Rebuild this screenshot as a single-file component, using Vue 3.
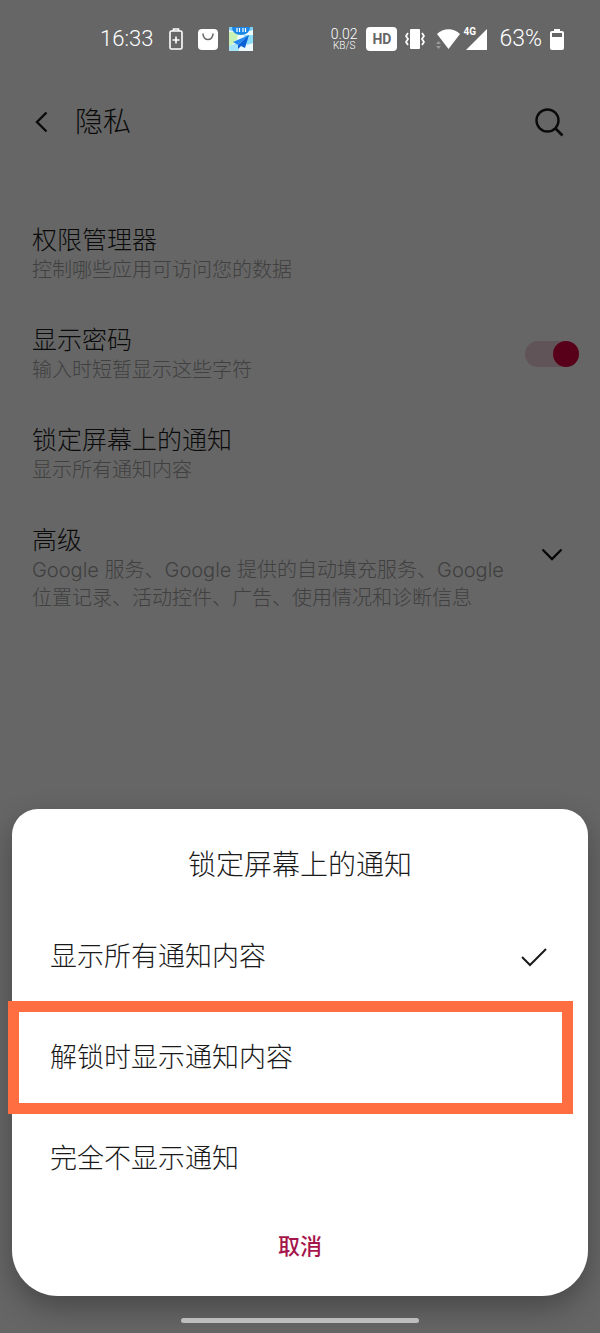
<script setup>
import { ref } from 'vue';

const showPassword = ref(true);
const selected = ref('all');

const rows = [
    { id: 'permission', title: '权限管理器', summary: '控制哪些应用可访问您的数据' },
    { id: 'password', title: '显示密码', summary: '输入时短暂显示这些字符', control: 'switch' },
    { id: 'lock', title: '锁定屏幕上的通知', summary: '显示所有通知内容' },
    {
        id: 'advanced',
        title: '高级',
        summary: 'Google 服务、Google 提供的自动填充服务、Google 位置记录、活动控件、广告、使用情况和诊断信息',
        control: 'expand',
    },
];

const options = [
    { value: 'all', label: '显示所有通知内容' },
    { value: 'unlocked', label: '解锁时显示通知内容', highlight: true },
    { value: 'none', label: '完全不显示通知' },
];
</script>

<template>
    <div class="screen">
        <div class="status-bar">
            <div class="status-group">
                <span class="clock">16:33</span>
                <svg class="icon-saver" width="14" height="22" viewBox="0 0 14 22">
                    <path d="M4.5 3V1h5v2" fill="none" stroke="#fff" stroke-width="1.6" />
                    <rect x="1" y="3" width="12" height="18" rx="1.5" fill="none" stroke="#fff" stroke-width="1.6" />
                    <path d="M7 8.5v7M3.5 12h7" stroke="#fff" stroke-width="1.6" />
                </svg>
                <svg width="20" height="21" viewBox="0 0 20 21">
                    <rect width="20" height="21" rx="4" fill="#fff" />
                    <path d="M5 5a5 5.5 0 0 0 10 0" fill="none" stroke="#666" stroke-width="1.5" stroke-linecap="round" />
                </svg>
                <svg width="24" height="24" viewBox="0 0 24 24">
                    <rect width="24" height="24" fill="#eef9fb" />
                    <path d="M0 5h9l-1 8-8 7z" fill="#c9f3b4" />
                    <path d="M15 8h9v8l-6 2z" fill="#8adcf8" />
                    <path d="M0 19l8-3 2 8H0z" fill="#a6e4fb" />
                    <path d="M0 0h24v3l-3 1H3L0 3z" fill="#7fd0f5" />
                    <path d="M3 0h18c0 5-4 8-9 8S3 5 3 0z" fill="#1a86e8" />
                    <path d="M8 1v4M10.5 1v4M14 1v4M16.5 1v4" stroke="#fff" stroke-width="1.2" />
                    <path d="M20 8L4 15l5 3z" fill="#2486f0" />
                    <path d="M20 8L9 18v4l3-3 4 2z" fill="#0b62d6" />
                </svg>
            </div>
            <div class="status-group">
                <div class="speed">
                    <span class="speed-value">0.02</span>
                    <span class="speed-unit">KB/S</span>
                </div>
                <span class="hd">HD</span>
                <svg class="icon-vibrate" width="20" height="20" viewBox="0 0 20 20">
                    <rect x="5" y="0" width="10" height="20" rx="1" fill="#fff" />
                    <path d="M3 4L1 7l2 3-2 3 2 3M17 4l2 3-2 3 2 3-2 3" fill="none" stroke="#fff" stroke-width="1.8" />
                </svg>
                <svg class="icon-wifi" width="24" height="20" viewBox="0 0 24 20">
                    <path d="M1 5C7-1.5 18-1.5 24 5L12.5 20z" fill="#fff" />
                    <path d="M0 15l2.5-3L5 15zM0 17h5l-2.5 3z" fill="#999" />
                </svg>
                <div class="signal">
                    <svg width="21" height="21" viewBox="0 0 21 21">
                        <path d="M21 0v21H0z" fill="#fff" />
                    </svg>
                    <span class="signal-type">4G</span>
                </div>
                <span class="percent">63%</span>
                <svg width="14" height="21" viewBox="0 0 14 21">
                    <path d="M4 0h6v2h2a2 2 0 0 1 2 2v15a2 2 0 0 1-2 2H2a2 2 0 0 1-2-2V4a2 2 0 0 1 2-2h2z" fill="#fff" />
                    <rect x="2" y="4" width="10" height="4" fill="#666" />
                </svg>
            </div>
        </div>

        <header class="app-bar">
            <button class="icon-btn" type="button" aria-label="返回">
                <svg width="13" height="22" viewBox="0 0 13 22">
                    <path d="M11.5 1.5L2 11l9.5 9.5" fill="none" stroke="#1a1a1a" stroke-width="2.4" />
                </svg>
            </button>
            <h1>隐私</h1>
            <button class="icon-btn" type="button" aria-label="搜索">
                <svg width="29" height="29" viewBox="0 0 29 29">
                    <circle cx="12.5" cy="12.5" r="11" fill="none" stroke="#1a1a1a" stroke-width="2.4" />
                    <path d="M20.5 20.5l7 7" stroke="#1a1a1a" stroke-width="2.6" />
                </svg>
            </button>
        </header>

        <main class="settings">
            <div v-for="row in rows" :key="row.id" class="row">
                <div class="row-text">
                    <h2 :id="row.id">{{ row.title }}</h2>
                    <p>{{ row.summary }}</p>
                </div>
                <div v-if="row.control" class="row-control">
                    <input
                        v-if="row.control === 'switch'"
                        v-model="showPassword"
                        class="switch"
                        type="checkbox"
                        role="switch"
                        :aria-labelledby="row.id"
                    />
                    <button v-else class="icon-btn" type="button" :aria-labelledby="row.id">
                        <svg width="22" height="13" viewBox="0 0 22 13">
                            <path d="M1.5 1.5L11 11l9.500-9.500" fill="none" stroke="#111" stroke-width="2.4" />
                        </svg>
                    </button>
                </div>
            </div>
        </main>

        <div class="scrim">
            <div class="sheet" role="dialog" aria-labelledby="sheet-title">
                <h2 id="sheet-title" class="sheet-title">锁定屏幕上的通知</h2>
                <label v-for="option in options" :key="option.value" class="option">
                    <input v-model="selected" type="radio" name="lock-notice" :value="option.value" />
                    <span>{{ option.label }}</span>
                    <svg v-if="selected === option.value" width="26" height="20" viewBox="0 0 26 20">
                        <path d="M1 10l8 8L25 2" fill="none" stroke="#1a1a1a" stroke-width="2" />
                    </svg>
                    <span v-if="option.highlight" class="highlight"></span>
                </label>
                <button class="cancel" type="button">取消</button>
            </div>
            <div class="home-bar"></div>
        </div>
    </div>
</template>

<style>
body {
    margin: 0;
    background: #fff;
}
</style>

<style scoped>
.screen {
    position: relative;
    min-height: 100vh;
    color: #1a1a1a;
    background: #fff;
    font-family: Inter, 'Noto Sans CJK SC', sans-serif;
    font-weight: 300;
}

h1,
h2,
p {
    margin: 0;
    font-weight: 300;
}

svg {
    display: block;
    flex: none;
}

.icon-btn {
    padding: 0;
    border: 0;
    background: none;
}

/* stays bright above the scrim */
.status-bar {
    position: relative;
    z-index: 2;
    display: flex;
    align-items: center;
    justify-content: space-between;
    height: 78px;
    padding: 0 36px 0 100px;
    color: #fff;
    font-family: Roboto, 'Liberation Sans', sans-serif;
}

.status-group {
    display: flex;
    align-items: center;
}

.clock {
    font-size: 22px;
    line-height: 24px;
}

.icon-saver {
    margin: 0 15px 0 16px;
}

.status-group svg + svg:last-child {
    margin-left: 11px;
}

.speed {
    display: flex;
    flex-direction: column;
    align-items: center;
    margin-right: 9px;
}

.speed-value {
    font-size: 14px;
    line-height: 13px;
}

.speed-unit {
    font-size: 10px;
    line-height: 10px;
}

.hd {
    padding: 0 6px;
    border-radius: 4px;
    color: #666;
    background: #fff;
    font-size: 14px;
    font-weight: 700;
    line-height: 24px;
}

.icon-vibrate {
    margin: 0 11px 0 8px;
}

.icon-wifi {
    margin-right: 6px;
}

.signal {
    position: relative;
    margin-right: 12px;
}

.signal-type {
    position: absolute;
    top: -3px;
    left: -3px;
    font-size: 10px;
    font-weight: 700;
    line-height: 12px;
}

.percent {
    margin-right: 8px;
    font-size: 23px;
    line-height: 24px;
}

.app-bar {
    display: flex;
    align-items: center;
    gap: 27px;
    height: 88px;
    padding: 0 36px 0 35px;
}

.app-bar h1 {
    flex: 1;
    font-size: 28px;
    line-height: 40px;
}

.settings {
    padding: 38px 21px 0 32px;
}

.row {
    display: flex;
    gap: 16px;
    padding: 21px 0 20px;
}

.row-text {
    flex: 1;
}

.row h2 {
    font-size: 25px;
    line-height: 31px;
}

.row p {
    color: #a0a0a0;
    font-size: 20px;
    line-height: 28px;
}

.row-control {
    display: flex;
    align-items: center;
    justify-content: center;
    width: 54px;
    height: 58px;
}

.switch {
    appearance: none;
    display: flex;
    width: 54px;
    height: 26px;
    margin: 0;
    border-radius: 13px;
    background: #ddd;
}

.switch::before {
    content: '';
    width: 26px;
    height: 26px;
    border-radius: 50%;
    background: #888;
}

.switch:checked {
    justify-content: flex-end;
    background: #f2d2dc;
}

.switch:checked::before {
    background: #dc0040;
}

.scrim {
    position: absolute;
    inset: 0;
    z-index: 1;
    display: flex;
    flex-direction: column;
    justify-content: flex-end;
    padding: 0 12px 10px;
    background: rgba(0, 0, 0, 0.6);
}

.sheet {
    display: flex;
    flex-direction: column;
    padding-bottom: 17px;
    border-radius: 26px 26px 46px 46px;
    background: #fff;
    box-shadow: 0 12px 30px rgba(0, 0, 0, 0.3);
}

.sheet-title {
    padding: 36px 0 21px;
    font-size: 28px;
    line-height: 40px;
    text-align: center;
}

.option {
    position: relative;
    display: flex;
    align-items: center;
    justify-content: space-between;
    height: 101px;
    padding: 0 41px 0 38px;
    font-size: 27px;
    line-height: 40px;
}

.option input {
    position: absolute;
    opacity: 0;
}

.highlight {
    position: absolute;
    inset: -6px 15px -6px -4px;
    border: 11px solid #ff6e40;
}

.cancel {
    height: 70px;
    border: 0;
    color: #a5144b;
    background: none;
    font-family: inherit;
    font-size: 22px;
    font-weight: 500;
}

.home-bar {
    align-self: center;
    width: 238px;
    height: 5px;
    margin-top: 22px;
    border-radius: 3px;
    background: #bdbdbd;
}
</style>
